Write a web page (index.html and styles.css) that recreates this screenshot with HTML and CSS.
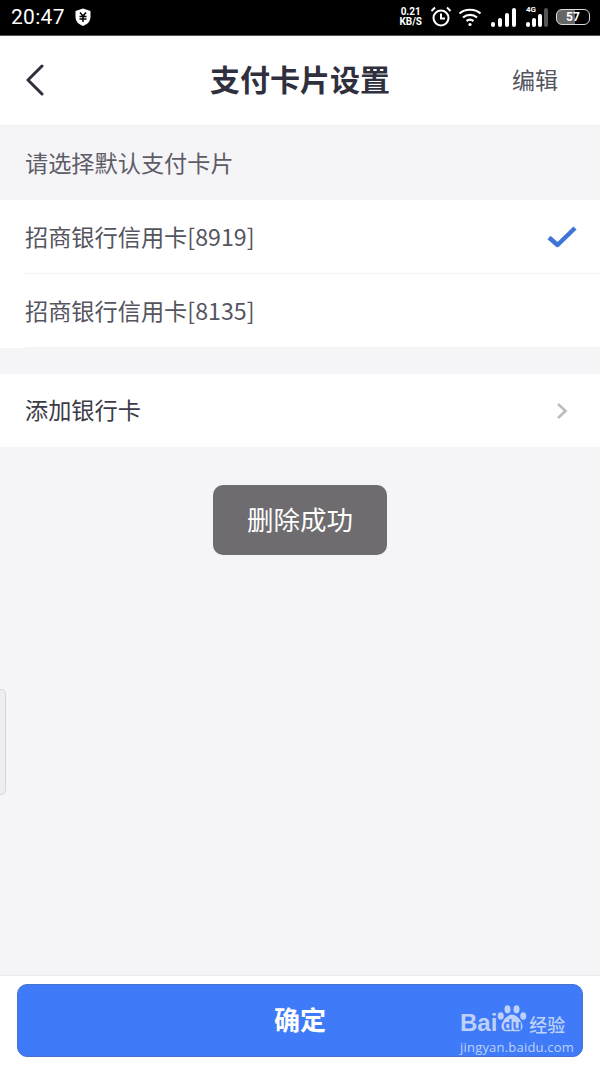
FILE: index.html
```html
<!DOCTYPE html>
<html lang="zh-CN">
<head>
    <meta charset="UTF-8">
    <meta name="viewport" content="width=device-width, initial-scale=1.0">
    <title>支付卡片设置</title>
    <link rel="stylesheet" href="styles.css">
</head>
<body>
    <div class="page">
        <div class="status-bar">
            <div class="status-left">
                <span class="clock">20:47</span>
                <svg class="shield" width="18" height="20" viewBox="0 0 18 20">
                    <path d="M9 1.5 L16.5 4 V10 C16.5 14.5 13 17.5 9 19 C5 17.5 1.500 14.5 1.500 10 V4 Z" fill="#fff"/>
                    <path d="M6 5.500 L9 9 L12 5.500 M5.500 9.500 H12.500 M5.500 12 H12.500 M9 9 V15" fill="none" stroke="#000" stroke-width="1.500"/>
                </svg>
            </div>
            <div class="status-right">
                <div class="speed"><span>0.21</span><span>KB/S</span></div>
                <svg class="alarm" width="22" height="22" viewBox="0 0 22 22" fill="none" stroke="#fff" stroke-width="2">
                    <circle cx="11" cy="12" r="7.500"/>
                    <path d="M11 7.500 V12.500 H15"/>
                    <path d="M1.500 5 L5 1.500 M20.500 5 L17 1.500"/>
                </svg>
                <svg class="wifi" width="24" height="20" viewBox="0 0 24 20" fill="none" stroke="#fff" stroke-width="2.200">
                    <path d="M1.500 6.500 C7 1.500 17 1.500 22.500 6.500"/>
                    <path d="M5 10.500 C9 7 15 7 19 10.500"/>
                    <path d="M8.500 14 C10.500 12.500 13.500 12.500 15.500 14"/>
                    <circle cx="12" cy="17.500" r="1.600" fill="#fff" stroke="none"/>
                </svg>
                <div class="signal">
                    <i class="bar h1"></i><i class="bar h2"></i><i class="bar h3"></i><i class="bar h4"></i>
                </div>
                <div class="signal signal-4g">
                    <span class="net">4G</span>
                    <i class="bar h1"></i><i class="bar h2"></i><i class="bar h3"></i><i class="bar h4 off"></i>
                </div>
                <div class="battery"><span>57</span></div>
            </div>
        </div>

        <div class="nav-bar">
            <svg class="back" width="20" height="32" viewBox="0 0 20 32" fill="none" stroke="#2f2f3d" stroke-width="3" stroke-linecap="round" stroke-linejoin="round">
                <path d="M17 2 L3 16 L17 30"/>
            </svg>
            <h1 class="nav-title">支付卡片设置</h1>
            <span class="nav-edit">编辑</span>
        </div>

        <div class="section-label">请选择默认支付卡片</div>

        <div class="card-list">
            <div class="row row-line">
                <span class="row-text">招商银行信用卡[8919]</span>
                <svg class="check" width="30" height="24" viewBox="0 0 30 24" fill="none" stroke="#3f74d8" stroke-width="4.500" stroke-linejoin="round">
                    <path d="M2 12.500 L10.500 20 L28 3"/>
                </svg>
            </div>
            <div class="row row-line">
                <span class="row-text">招商银行信用卡[8135]</span>
            </div>
        </div>

        <div class="add-card row">
            <span class="row-text row-text-dark">添加银行卡</span>
            <svg class="arrow" width="12" height="18" viewBox="0 0 12 18" fill="none" stroke="#bcbcc2" stroke-width="2.600">
                <path d="M2 2 L9.500 9 L2 16"/>
            </svg>
        </div>

        <div class="spacer"></div>

        <div class="footer">
            <button class="confirm">确定</button>
        </div>

        <div class="toast">删除成功</div>
        <div class="side-handle"></div>

        <div class="watermark">
            <div class="wm-top">
                <span class="wm-bai">Bai</span>
                <div class="wm-paw">
                    <svg width="40" height="38" viewBox="0 0 40 38" fill="#bdd1fa">
                        <ellipse cx="5" cy="15" rx="4" ry="5"/>
                        <ellipse cx="14" cy="6" rx="4" ry="5.500"/>
                        <ellipse cx="26" cy="6" rx="4" ry="5.500"/>
                        <ellipse cx="35" cy="15" rx="4" ry="5"/>
                        <path d="M20 13 C26 13 34 22 34 29 C34 36 27 36 20 35 C13 36 6 36 6 29 C6 22 14 13 20 13 Z"/>
                    </svg>
                    <span class="wm-du">du</span>
                </div>
                <span class="wm-cn">经验</span>
            </div>
            <div class="wm-url">jingyan.baidu.com</div>
        </div>
    </div>
</body>
</html>
```

FILE: styles.css
```css
* {
    box-sizing: border-box;
}
body {
    margin: 0;
    font-family: "Noto Sans CJK SC", "Liberation Sans", sans-serif;
    background-color: #f5f4f7;
}
.page {
    position: relative;
    width: 600px;
    height: 1067px;
    display: flex;
    flex-direction: column;
    overflow: hidden;
}
.status-bar {
    height: 36px;
    flex: none;
    background-color: #000;
    color: #fff;
    display: flex;
    justify-content: space-between;
    align-items: center;
    padding: 0 10px 2px 11px;
    border-bottom: 1px solid #555;
}
.status-left {
    display: flex;
    align-items: center;
    gap: 9px;
}
.clock {
    font-family: Roboto, "Liberation Sans", sans-serif;
    font-size: 21px;
    font-weight: 400;
    letter-spacing: 0.3px;
}
.status-right {
    display: flex;
    align-items: center;
}
.speed {
    display: flex;
    flex-direction: column;
    align-items: center;
    font-family: Roboto, "Liberation Sans", sans-serif;
    font-size: 10px;
    font-weight: 700;
    line-height: 10px;
    margin-right: 8px;
}
.alarm {
    margin-right: 6px;
}
.wifi {
    margin-right: 9px;
}
.signal {
    position: relative;
    display: flex;
    align-items: flex-end;
    gap: 3px;
    height: 20px;
    margin-right: 10px;
}
.signal-4g {
    gap: 2px;
    margin-right: 8px;
}
.bar {
    display: block;
    width: 4px;
    border-radius: 2px;
    background-color: #fff;
}
.bar.h1 { height: 5px; }
.bar.h2 { height: 9px; }
.bar.h3 { height: 14px; }
.bar.h4 { height: 19px; }
.bar.off { background-color: #555; }
.signal-4g .bar.h1 { height: 5px; }
.signal-4g .bar.h2 { height: 9px; }
.signal-4g .bar.h3 { height: 13px; }
.net {
    position: absolute;
    top: -2px;
    left: 0;
    font-family: Roboto, "Liberation Sans", sans-serif;
    font-size: 8px;
    font-weight: 700;
    line-height: 9px;
}
.battery {
    width: 34px;
    height: 16px;
    border: 1.500px solid #ddd;
    border-radius: 6px;
    background: linear-gradient(90deg, #666 57%, #000 57%);
    display: flex;
    justify-content: center;
    align-items: center;
    font-family: Roboto, "Liberation Sans", sans-serif;
    font-size: 12px;
    font-weight: 700;
}
.nav-bar {
    height: 90px;
    flex: none;
    background-color: #fff;
    display: flex;
    align-items: center;
    justify-content: space-between;
    padding: 0 42px 2px 25px;
    border-bottom: 1px solid #f0eff2;
    position: relative;
}
.nav-title {
    margin: -3px 0 0 43px;
    font-size: 30px;
    line-height: 40px;
    font-weight: 700;
    color: #2f2f3d;
}
.nav-edit {
    font-size: 23px;
    line-height: 30px;
    margin-top: -1px;
    color: #55555f;
}
.section-label {
    height: 74px;
    flex: none;
    padding: 0 0 2px 25px;
    display: flex;
    align-items: center;
    font-size: 23.2px;
    color: #5d5d68;
}
.card-list {
    flex: none;
    background-color: #fff;
    margin-bottom: 26px;
}
.row {
    height: 74px;
    background-color: #fff;
    display: flex;
    align-items: center;
    justify-content: space-between;
}
.card-list .row {
    margin-left: 25px;
    padding: 0 23px 2px 0;
}
.row-line {
    border-bottom: 1px solid #f3f2f5;
}
.row-text {
    font-size: 23.2px;
    color: #55555f;
}
.row-text-dark {
    color: #3c3c48;
}
.add-card {
    flex: none;
    height: 73px;
    padding: 0 32px 3px 25px;
}
.card-list .check {
    margin-top: 2px;
}
.add-card .arrow {
    margin-top: 3px;
}
.spacer {
    flex: 1;
}
.footer {
    height: 92px;
    flex: none;
    background-color: #fff;
    border-top: 1px solid #ecebee;
    padding: 8px 17px 10px;
}
.confirm {
    width: 100%;
    height: 73px;
    border: 1px solid #4a73cf;
    border-radius: 10px;
    background-color: #3f7af8;
    color: #fff;
    font-family: inherit;
    font-size: 26px;
    font-weight: 700;
    line-height: 34px;
    padding: 0 0 3px;
    cursor: pointer;
}
.toast {
    position: absolute;
    top: 485px;
    left: 213px;
    width: 174px;
    height: 70px;
    border-radius: 10px;
    background-color: #6e6c6f;
    color: #fff;
    font-size: 26.5px;
    padding-bottom: 3px;
    display: flex;
    align-items: center;
    justify-content: center;
}
.side-handle {
    position: absolute;
    top: 689px;
    left: -6px;
    width: 12px;
    height: 106px;
    border: 1px solid #d6d5d9;
    border-radius: 5px;
    background-color: #eeedf0;
}
.watermark {
    position: absolute;
    top: 1001px;
    left: 460px;
    width: 108px;
    color: #bdd1fa;
}
.wm-top {
    display: flex;
    align-items: flex-end;
    height: 35px;
}
.wm-bai {
    font-family: "Liberation Sans", sans-serif;
    font-size: 24px;
    font-weight: 700;
    line-height: 26px;
}
.wm-paw {
    position: relative;
    width: 30px;
    height: 34px;
    margin: 0 2px 0 0;
}
.wm-paw svg {
    width: 30px;
    height: 34px;
}
.wm-du {
    position: absolute;
    left: 6px;
    top: 15px;
    font-family: "Liberation Sans", sans-serif;
    font-size: 15px;
    font-weight: 700;
    line-height: 16px;
    color: #3f7af8;
}
.wm-cn {
    font-size: 18px;
    line-height: 20px;
    font-weight: 500;
    padding-bottom: 2px;
}
.wm-url {
    margin-top: 3px;
    font-family: "Open Sans", "Liberation Sans", sans-serif;
    font-size: 13px;
    line-height: 16px;
    letter-spacing: 0.2px;
    white-space: nowrap;
}
```
